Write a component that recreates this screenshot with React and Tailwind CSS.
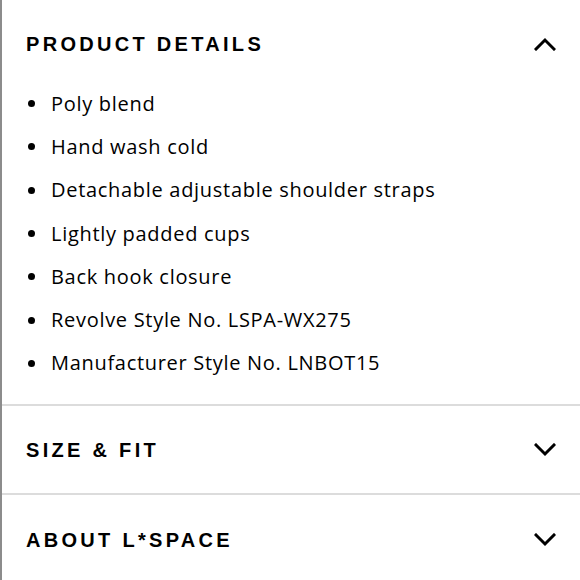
import { useState } from "react";

const details = [
    "Poly blend",
    "Hand wash cold",
    "Detachable adjustable shoulder straps",
    "Lightly padded cups",
    "Back hook closure",
    "Revolve Style No. LSPA-WX275",
    "Manufacturer Style No. LNBOT15",
];

function Chevron({ up }) {
    return (
        <svg width="22" height="14" viewBox="0 0 22 14" fill="none">
            <path
                d={up ? "M2 12 L11 3 L20 12" : "M2 2 L11 11 L20 2"}
                stroke="black"
                strokeWidth="3"
                strokeLinecap="square"
            />
        </svg>
    );
}

function Header({ title, open, className = "" }) {
    return (
        <div className={`flex items-center justify-between pl-[24px] pr-[24px] ${className}`}>
            <h2 className="text-[20px] font-bold tracking-[0.165em] text-black font-['Liberation_Sans',sans-serif]">
                {title}
            </h2>
            <Chevron up={open} />
        </div>
    );
}

export default function App() {
    const [open] = useState("details");

    return (
        <div className="w-[580px] h-[580px] overflow-hidden bg-white border-l-2 border-[#8c8c8c]">
            {/* Product details */}
            <section className="border-b-2 border-[#dcdcdc] pb-[19px]">
                <Header title="PRODUCT DETAILS" open={open === "details"} className="h-[82px] pt-[6px]" />
                <ul className="font-['Open_Sans',sans-serif] text-[20px] tracking-[0.035em] text-black">
                    {details.map((d) => (
                        <li key={d} className="flex items-center h-[43.3px]">
                            <span className="ml-[26px] w-[7px] h-[7px] rounded-full bg-black shrink-0" />
                            <span className="ml-[16px]">{d}</span>
                        </li>
                    ))}
                </ul>
            </section>

            {/* Size & fit */}
            <section className="border-b-2 border-[#dcdcdc]">
                <Header title="SIZE & FIT" open={false} className="h-[87px]" />
            </section>

            {/* About */}
            <section>
                <Header title="ABOUT L*SPACE" open={false} className="h-[90px]" />
            </section>
        </div>
    );
}
